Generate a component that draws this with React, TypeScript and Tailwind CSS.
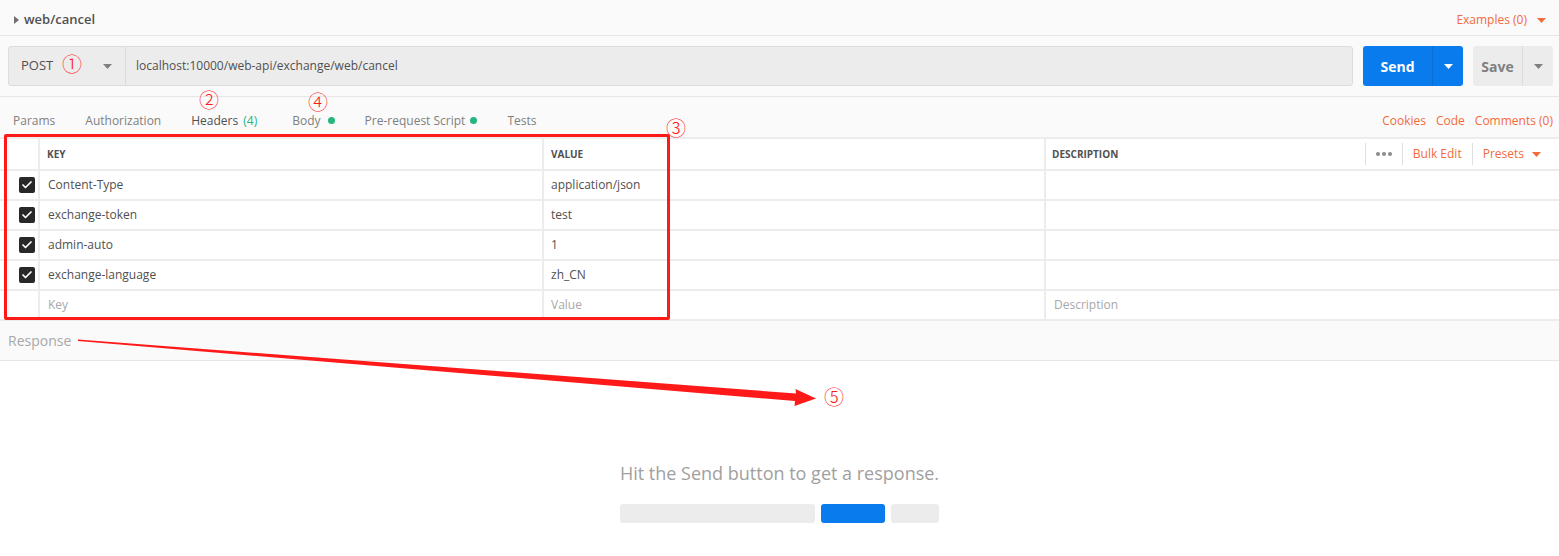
import React from "react";
import { Check } from "lucide-react";

type Header = {
  key: string;
  value: string;
};

const headers: Header[] = [
  { key: "Content-Type", value: "application/json" },
  { key: "exchange-token", value: "test" },
  { key: "admin-auto", value: "1" },
  { key: "exchange-language", value: "zh_CN" },
];

const Caret = ({ className }: { className: string }) => (
  <svg width="9" height="5" viewBox="0 0 9 5" className={className}>
    <path d="M0 0h9L4.5 5z" fill="currentColor" />
  </svg>
);

const Dot = ({ className }: { className: string }) => (
  <span className={`inline-block h-[7px] w-[7px] rounded-full bg-[#26b47f] ${className}`} />
);

// red markers laid over the screenshot
const Mark = ({ n, className }: { n: string; className: string }) => (
  <span
    className={`absolute text-[20px] leading-none text-[#ff1a1a] font-['Noto_Sans_CJK_SC',sans-serif] font-light ${className}`}
  >
    {n}
  </span>
);

const App = () => {
  return (
    <div className="relative h-[556px] w-full overflow-hidden bg-white font-['Open_Sans',sans-serif] text-[12px] text-[#505050]">
      {/* title bar */}
      <div className="flex h-[36px] items-center border-b border-[#e6e6e6] bg-[#fafafa] pl-[14px] pr-[13px] pt-[5px]">
        <svg width="5" height="8" viewBox="0 0 5 8" className="text-[#707070]">
          <path d="M0 0l5 4-5 4z" fill="currentColor" />
        </svg>
        <span className="ml-[5px] text-[13px] font-semibold text-[#505050]">web/cancel</span>
        <div className="ml-auto flex items-center gap-[10px] text-[#f26b3a]">
          <span>Examples (0)</span>
          <Caret className="text-[#f26b3a]" />
        </div>
      </div>

      {/* url row */}
      <div className="flex h-[61px] items-center border-b border-[#e6e6e6] bg-[#fafafa] pl-[8px] pr-[6px]">
        <div className="flex h-[40px] flex-1 rounded-[3px] border border-[#dcdcdc] bg-[#ececec]">
          <div className="flex w-[117px] items-center justify-between border-r border-[#dcdcdc] pl-[12px] pr-[13px]">
            <span className="text-[13px] text-[#505050]">POST</span>
            <Caret className="text-[#808080]" />
          </div>
          <div className="flex items-center pl-[10px] text-[12px] text-[#505050]">
            localhost:10000/web-api/exchange/web/cancel
          </div>
        </div>
        <div className="ml-[10px] flex h-[40px] w-[100px] overflow-hidden rounded-[3px] bg-[#097bed] text-white">
          <div className="flex w-[70px] items-center justify-center border-r border-[#0a6ed4] text-[14px] font-bold">
            Send
          </div>
          <div className="flex flex-1 items-center justify-center">
            <Caret className="text-white" />
          </div>
        </div>
        <div className="ml-[10px] flex h-[40px] w-[80px] overflow-hidden rounded-[3px] bg-[#ececec] text-[#808080]">
          <div className="flex w-[50px] items-center justify-center border-r border-[#dcdcdc] text-[14px] font-bold">
            Save
          </div>
          <div className="flex flex-1 items-center justify-center">
            <Caret className="text-[#808080]" />
          </div>
        </div>
      </div>

      {/* tabs */}
      <div className="flex h-[40px] items-center bg-[#fafafa] pl-[13px] pr-[6px] pt-[7px] text-[12px] text-[#808080]">
        <span>Params</span>
        <span className="ml-[30px]">Authorization</span>
        <span className="ml-[30px] text-[#505050]">
          Headers <span className="ml-[2px] text-[#26b47f]">(4)</span>
        </span>
        <span className="ml-[35px] flex items-center">
          Body
          <Dot className="ml-[7px]" />
        </span>
        <span className="ml-[30px] flex items-center">
          Pre-request Script
          <Dot className="ml-[5px]" />
        </span>
        <span className="ml-[30px]">Tests</span>
        <div className="ml-auto flex gap-[10px] text-[#f26b3a]">
          <span>Cookies</span>
          <span>Code</span>
          <span>Comments (0)</span>
        </div>
      </div>

      {/* headers table */}
      <div className="border-t-2 border-[#ececec] bg-white">
        <div className="flex h-[32px] border-b-2 border-[#ececec]">
          <div className="w-[40px] border-r-2 border-[#ececec]" />
          <div className="flex w-[504px] items-center border-r-2 border-[#ececec] pl-[7px] text-[10px] font-bold text-[#505050]">
            KEY
          </div>
          <div className="flex w-[502px] items-center border-r-2 border-[#ececec] pl-[7px] text-[10px] font-bold text-[#505050]">
            VALUE
          </div>
          <div className="flex flex-1 items-center pl-[6px] pr-[18px]">
            <span className="text-[10px] font-bold text-[#505050]">DESCRIPTION</span>
            <div className="ml-auto flex h-[22px] items-center">
              <div className="h-full border-l border-[#e0e0e0]" />
              <div className="flex w-[36px] justify-center gap-[2px]">
                <span className="h-[4px] w-[4px] rounded-full bg-[#8a8a8a]" />
                <span className="h-[4px] w-[4px] rounded-full bg-[#8a8a8a]" />
                <span className="h-[4px] w-[4px] rounded-full bg-[#8a8a8a]" />
              </div>
              <div className="h-full border-l border-[#e0e0e0]" />
              <span className="px-[10px] text-[12px] text-[#f26b3a]">Bulk Edit</span>
              <div className="h-full border-l border-[#e0e0e0]" />
              <span className="pl-[10px] text-[12px] text-[#f26b3a]">Presets</span>
              <Caret className="ml-[8px] text-[#f26b3a]" />
            </div>
          </div>
        </div>

        {headers.map((h) => (
          <div key={h.key} className="flex h-[30px] border-b-2 border-[#ececec]">
            <div className="flex w-[40px] items-center justify-end border-r-2 border-[#ececec] pr-[3px]">
              <span className="flex h-[16px] w-[16px] items-center justify-center rounded-[2px] bg-[#282828]">
                <Check size={12} strokeWidth={3.5} className="text-white" />
              </span>
            </div>
            <div className="flex w-[504px] items-center border-r-2 border-[#ececec] pl-[8px]">{h.key}</div>
            <div className="flex w-[502px] items-center border-r-2 border-[#ececec] pl-[7px]">{h.value}</div>
            <div className="flex-1" />
          </div>
        ))}

        <div className="flex h-[30px] border-b-2 border-[#ececec] text-[#a8a8a8]">
          <div className="w-[40px] border-r-2 border-[#ececec]" />
          <div className="flex w-[504px] items-center border-r-2 border-[#ececec] pl-[8px]">Key</div>
          <div className="flex w-[502px] items-center border-r-2 border-[#ececec] pl-[7px]">Value</div>
          <div className="flex flex-1 items-center pl-[8px]">Description</div>
        </div>
      </div>

      {/* response */}
      <div className="flex h-[40px] items-center border-b border-[#e6e6e6] bg-[#fafafa] pb-[1px] pl-[8px] text-[14px] text-[#a8a8a8]">
        Response
      </div>
      <div className="flex flex-col items-center pt-[100px]">
        <span className="text-[18px] leading-[24px] text-[#a0a0a0]">Hit the Send button to get a response.</span>
        <div className="mt-[19px] flex gap-[6px]">
          <div className="h-[19px] w-[195px] rounded-[3px] bg-[#ececec]" />
          <div className="h-[19px] w-[64px] rounded-[3px] bg-[#097bed]" />
          <div className="h-[19px] w-[48px] rounded-[3px] bg-[#ececec]" />
        </div>
      </div>

      {/* annotations */}
      <div className="pointer-events-none absolute left-[4px] top-[134px] h-[186px] w-[666px] rounded-[2px] border-[3px] border-[#ff1a1a]" />
      <svg className="pointer-events-none absolute left-0 top-0" width="1559" height="556">
        <polygon
          points="78,339.5 796,393.5 795.5,389 816,398.5 794.5,406 795,401 78,341"
          fill="#ff1a1a"
        />
      </svg>
      <Mark n="①" className="left-[62px] top-[54px]" />
      <Mark n="②" className="left-[199px] top-[90px]" />
      <Mark n="④" className="left-[308px] top-[92px]" />
      <Mark n="③" className="left-[666px] top-[118px]" />
      <Mark n="⑤" className="left-[824px] top-[387px]" />
    </div>
  );
};

export default App;
